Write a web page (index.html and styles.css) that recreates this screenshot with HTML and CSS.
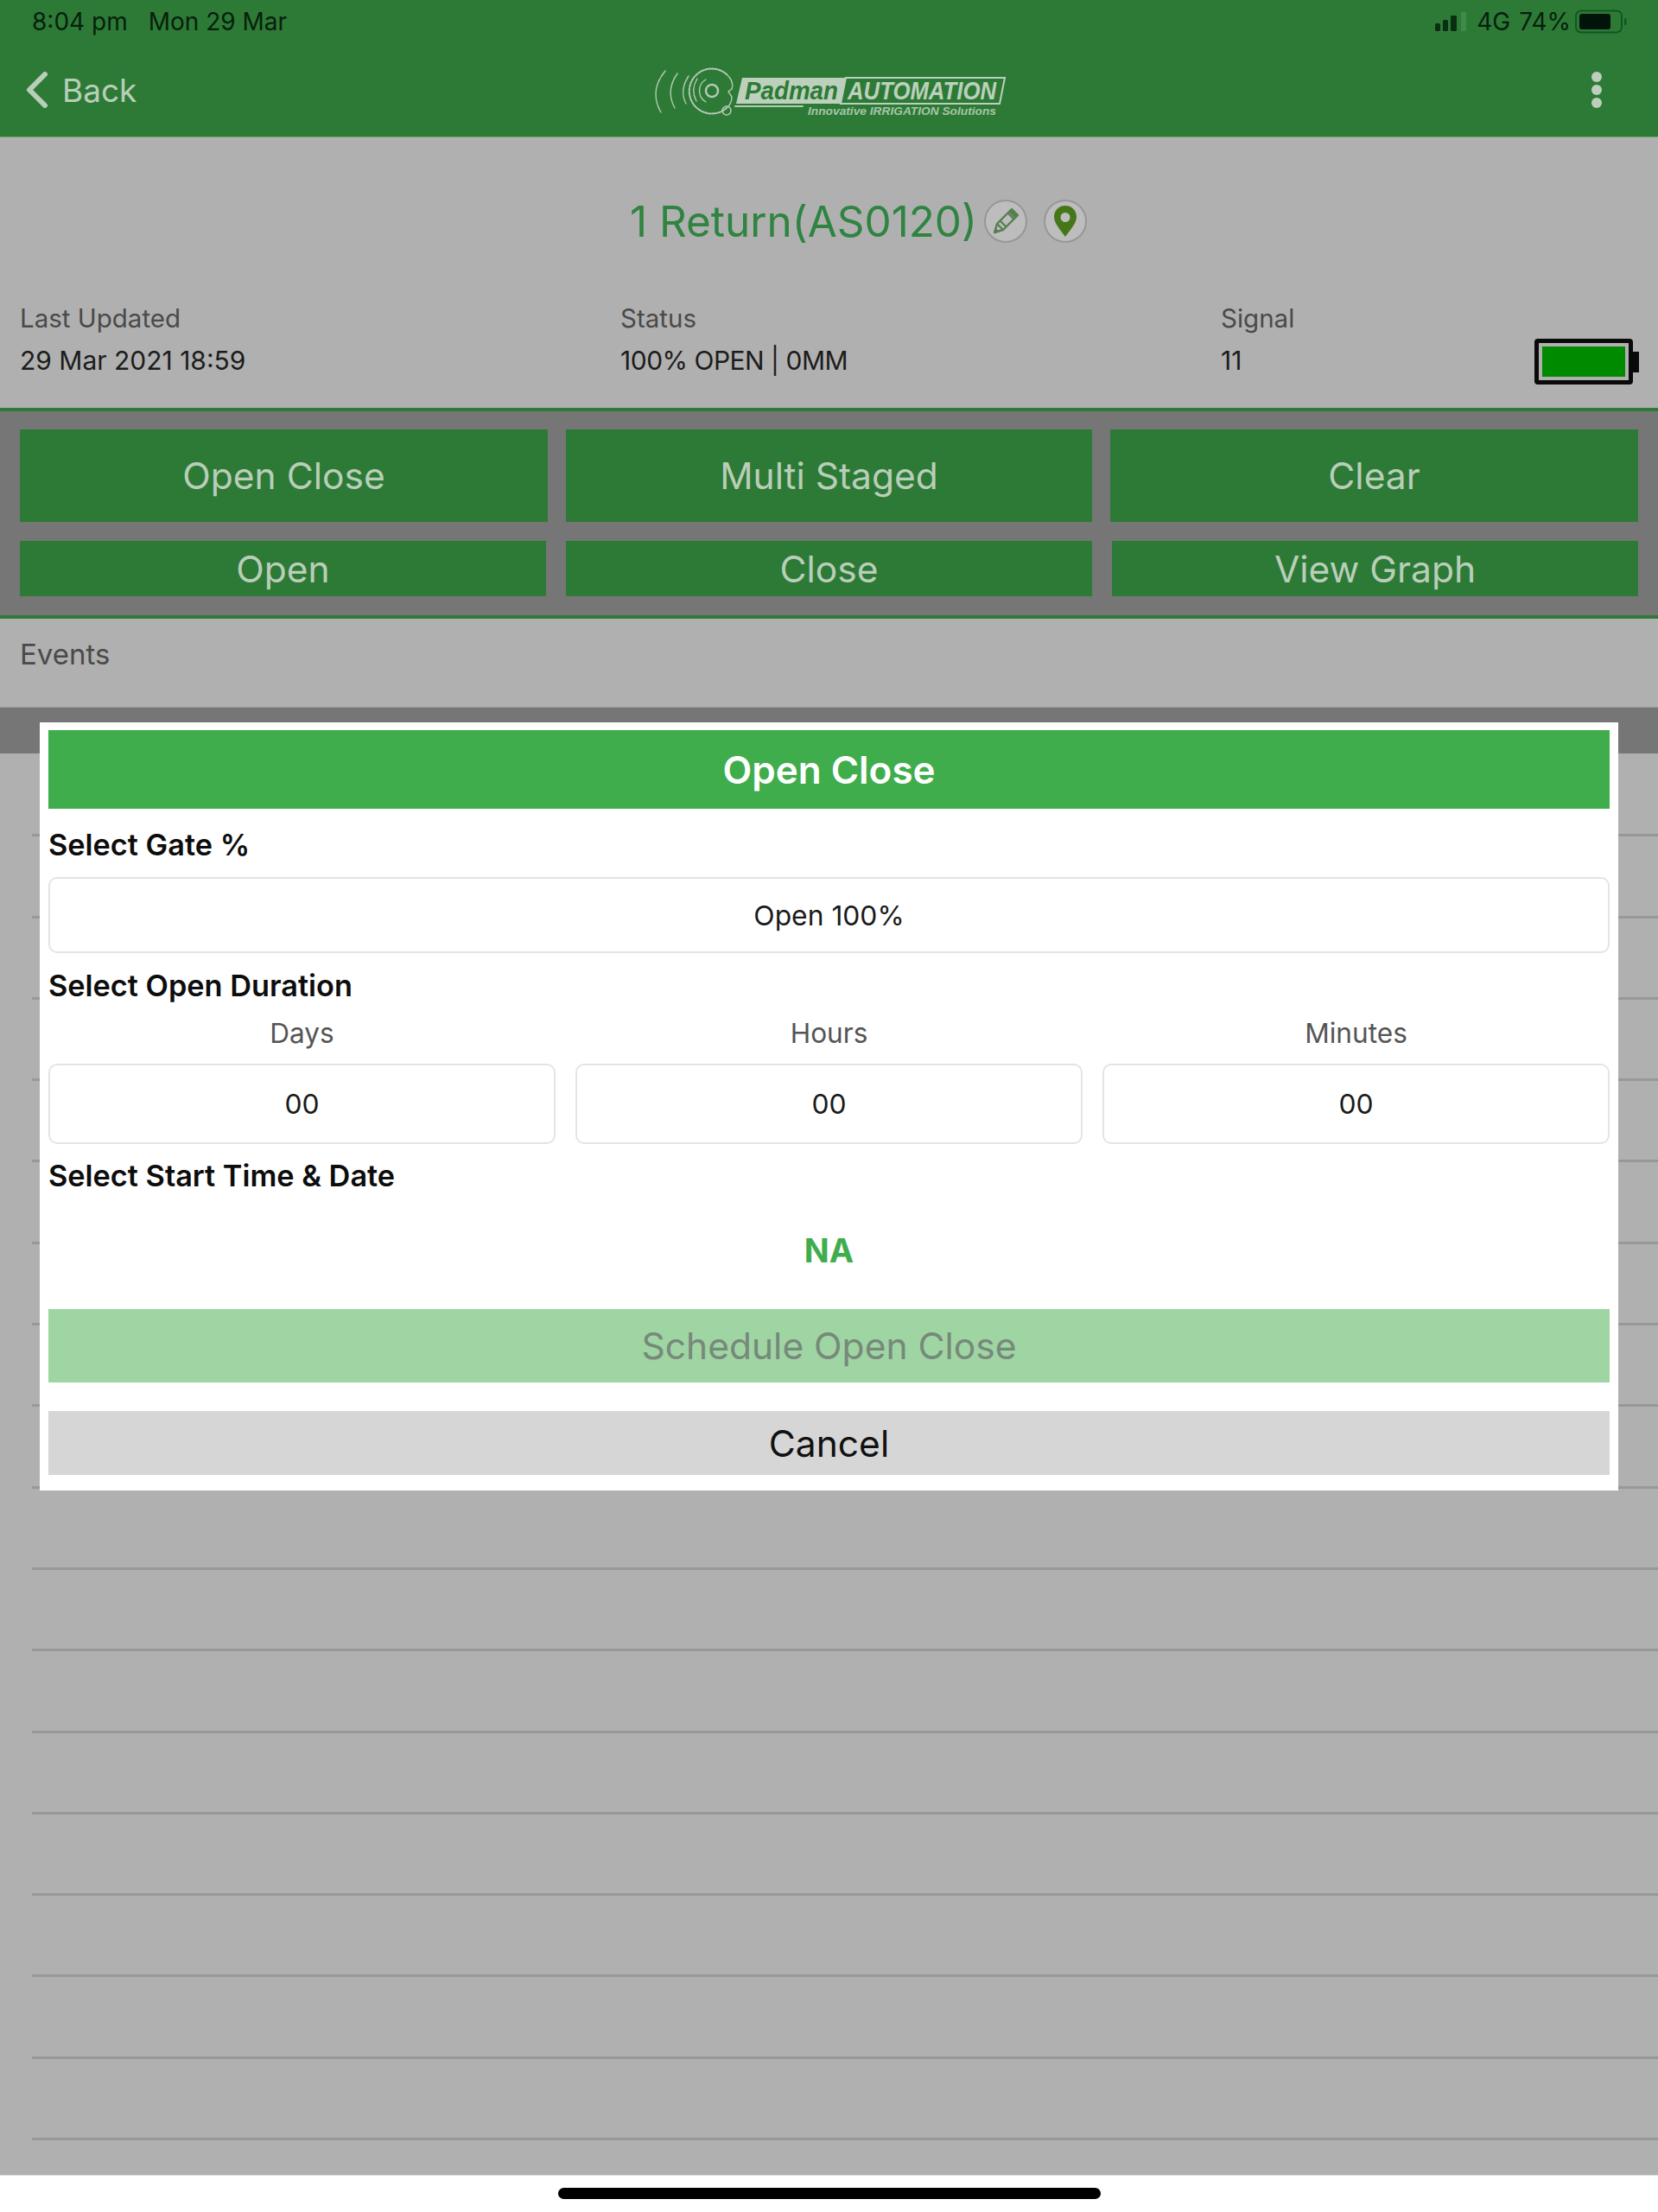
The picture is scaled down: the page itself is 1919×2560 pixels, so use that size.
FILE: index.html
```html
<!DOCTYPE html>
<html lang="en">
<head>
<meta charset="utf-8">
<title>Open Close</title>
<link rel="stylesheet" href="styles.css">
</head>
<body>
<div class="page">
  <header class="appbar">
    <div class="status">
      <div class="status-left"><span>8:04 pm</span><span>Mon 29 Mar</span></div>
      <div class="status-right">
        <svg class="signal" width="38" height="24" viewBox="0 0 38 24"><rect x="0" y="14" width="6" height="9" rx="1.5" fill="#0a2e12"/><rect x="9" y="10" width="6" height="13" rx="1.5" fill="#0a2e12"/><rect x="18" y="5" width="7" height="18" rx="1.5" fill="#0a2e12"/><rect x="30" y="1" width="6" height="22" fill="#3f8a48"/></svg>
        <span>4G</span><span>74%</span>
        <svg class="ios-batt" width="62" height="28" viewBox="0 0 62 28"><rect x="1" y="1.500" width="53" height="25" rx="6" fill="none" stroke="#145522" stroke-width="2"/><rect x="5" y="5" width="36" height="18" rx="3" fill="#02140a"/><rect x="57" y="10" width="2.500" height="8" rx="1" fill="#145522"/></svg>
      </div>
    </div>
    <nav class="nav">
      <div class="back">
        <svg width="28" height="42" viewBox="0 0 28 42"><path d="M24 3 L6 21 L24 39" fill="none" stroke="#b9ceb9" stroke-width="6" stroke-linecap="round" stroke-linejoin="round"/></svg>
        <span>Back</span>
      </div>
      <svg class="logo" width="430" height="70" viewBox="0 0 430 70">
        <g fill="none" stroke="#b4cab4" stroke-width="1.400" stroke-linecap="round">
          <path d="M25 12 Q6 35 20 60"/>
          <path d="M39 15 Q25 35 36 55"/>
          <path d="M52 18 Q41 35 49 50"/>
          <path d="M62 21 Q54 34 61 47"/>
          <circle cx="79" cy="35" r="7" stroke-width="2.500" stroke-dasharray="3 1.500"/>
          <path d="M96 16 A26 26 0 1 0 96 55" stroke-width="2" stroke-dasharray="2.500 1.500"/>
          <path d="M96 16 Q105 24 102 33 L98 36 L102 42 Q102 50 96 55" stroke-width="1.400"/>
          <path d="M72 22 A15 15 0 0 0 72 48"/>
          <circle cx="96" cy="58" r="5" stroke-width="1.600"/>
          <path d="M106 53 L184 53" stroke-width="2"/>
        </g>
        <polygon points="114,20 234,20 228,50 107,50" fill="#bcd0bc"/>
        <polygon points="234,20 418,20 412,50 228,50" fill="none" stroke="#bcd0bc" stroke-width="2"/>
        <text x="117" y="45" class="logo-a" textLength="108" lengthAdjust="spacingAndGlyphs">Padman</text>
        <text x="236" y="45" class="logo-b" textLength="172" lengthAdjust="spacingAndGlyphs">AUTOMATION</text>
        <text x="190" y="63" class="logo-c" textLength="218" lengthAdjust="spacingAndGlyphs">Innovative IRRIGATION Solutions</text>
      </svg>
      <div class="kebab"><i></i><i></i><i></i></div>
    </nav>
  </header>

  <section class="summary">
    <div class="title-row">
      <h1>1 Return(AS0120)</h1>
      <span class="round">
        <svg width="34" height="34" viewBox="0 0 34 34"><g fill="none" stroke="#55804e" stroke-width="2.400" stroke-linejoin="round"><path d="M4 30 L7 20 L24 3 L31 10 L14 27 Z"/><path d="M7 20 L14 27 M11 17 L17 23 M20 8 L26 14"/></g><path d="M24 3 L31 10 L27.500 13.500 L20.500 6.500 Z" fill="#55804e"/><path d="M4 30 L5.500 25 L9 28.500 Z" fill="#55804e"/></svg>
      </span>
      <span class="round round-gap">
        <svg width="28" height="38" viewBox="0 0 28 38"><path fill-rule="evenodd" d="M14 1 C6 1 1 7 1 14 C1 22 10 31 14 37 C18 31 27 22 27 14 C27 7 22 1 14 1 Z M14 9 A5.500 5.500 0 1 1 14 20 A5.500 5.500 0 1 1 14 9 Z" fill="#457719"/></svg>
      </span>
    </div>
    <div class="info">
      <div class="info-col"><div class="lbl">Last Updated</div><div class="val">29 Mar 2021 18:59</div></div>
      <div class="info-col"><div class="lbl">Status</div><div class="val val-status">100% OPEN | 0MM</div></div>
      <div class="info-col info-last"><div class="lbl">Signal</div><div class="val">11</div></div>
      <div class="battery"><div class="battery-body"><div class="battery-fill"></div></div><div class="battery-cap"></div></div>
    </div>
  </section>

  <section class="actions">
    <div class="btn-row row-top">
      <div class="btn tall">Open Close</div>
      <div class="btn tall">Multi Staged</div>
      <div class="btn tall">Clear</div>
    </div>
    <div class="btn-row row-bottom">
      <div class="btn short">Open</div>
      <div class="btn short">Close</div>
      <div class="btn short">View Graph</div>
    </div>
  </section>

  <section class="events">Events</section>
  <div class="thead"></div>
  <div class="rows">
    <div class="row"></div><div class="row"></div><div class="row"></div><div class="row"></div>
    <div class="row"></div><div class="row"></div><div class="row"></div><div class="row"></div>
    <div class="row"></div><div class="row"></div><div class="row"></div><div class="row"></div>
    <div class="row"></div><div class="row"></div><div class="row"></div><div class="row"></div>
    <div class="row"></div>
  </div>
  <footer class="home"><div class="home-bar"></div></footer>

  <div class="modal">
    <div class="modal-head">Open Close</div>
    <div class="m-label l-gate">Select Gate %</div>
    <div class="field f-gate">Open 100%</div>
    <div class="m-label l-dur">Select Open Duration</div>
    <div class="dur-grid">
      <div class="dur-col"><div class="dur-name">Days</div><div class="field f-dur">00</div></div>
      <div class="dur-col"><div class="dur-name">Hours</div><div class="field f-dur">00</div></div>
      <div class="dur-col"><div class="dur-name">Minutes</div><div class="field f-dur">00</div></div>
    </div>
    <div class="m-label l-start">Select Start Time &amp; Date</div>
    <div class="na">NA</div>
    <div class="m-btn schedule">Schedule Open Close</div>
    <div class="m-btn cancel">Cancel</div>
  </div>
</div>
</body>
</html>
```

FILE: styles.css
```css
* { box-sizing: border-box; }
html, body { margin: 0; padding: 0; background: #fff; }
body { font-family: Inter, "Liberation Sans", sans-serif; }
.page { position: relative; width: 1919px; height: 2560px; overflow: hidden; }

.appbar { height: 159px; background: #2d7a36; border-bottom: 1px solid #62a86a; }
.status { height: 50px; display: flex; justify-content: space-between; align-items: center; padding: 0 34px 0 37px; color: #071f0d; font-size: 28px; }
.status-left { display: flex; gap: 24px; }
.status-right { display: flex; align-items: center; gap: 10px; }
.ios-batt { margin-left: -5px; }
.nav { height: 108px; display: flex; align-items: center; justify-content: space-between; padding: 0 65px 0 28px; position: relative; }
.back { display: flex; align-items: center; gap: 16px; color: #b9ceb9; font-size: 37px; }
.logo { position: absolute; left: 745px; top: 20px; }
.logo-a { font: italic 700 29px "Liberation Sans", sans-serif; fill: #2d7a36; }
.logo-b { font: italic 700 29px "Liberation Sans", sans-serif; fill: #bcd0bc; }
.logo-c { font: italic 700 13.500px "Liberation Sans", sans-serif; fill: #a9c4a9; }
.kebab { display: flex; flex-direction: column; gap: 3px; }
.kebab i { display: block; width: 12px; height: 12px; border-radius: 50%; background: #bccfbc; }

.summary { height: 313px; background: #b0b0b0; }
.title-row { height: 187px; display: flex; align-items: center; justify-content: center; padding: 6px 0 0 68px; }
.title-row h1 { margin: 0 8px 0 0; font-size: 49.400px; font-weight: 400; color: #2e8440; }
.round { width: 50px; height: 50px; border-radius: 50%; background: #bdbdbd; border: 2px solid #979797; display: flex; align-items: center; justify-content: center; }
.round-gap { margin-left: 19px; }
.info { display: flex; padding-left: 23px; align-items: flex-start; }
.info-col { width: 695px; }
.info-last { width: 363px; }
.lbl { height: 44px; line-height: 44px; font-size: 29.500px; color: #4a4a4a; }
.val { height: 52px; line-height: 52px; font-size: 30px; color: #1c1c1c; margin-top: 1px; }
.val-status { letter-spacing: -0.500px; }
.battery { display: flex; align-items: center; margin-top: 46px; }
.battery-body { width: 114px; height: 53px; border: 5px solid #0a0a0a; border-radius: 4px; padding: 4px; }
.battery-fill { width: 100%; height: 100%; background: #008a00; }
.battery-cap { width: 7px; height: 24px; background: #0a0a0a; }

.actions { height: 244px; background: #767676; border-top: 4px solid #2f7a39; border-bottom: 4px solid #2f7a39; padding-top: 21px; display: flex; flex-direction: column; gap: 22px; }
.btn-row { display: grid; padding-left: 23px; }
.row-top { grid-template-columns: 611px 609px 611px; gap: 21px; }
.row-bottom { grid-template-columns: repeat(3, 609px); gap: 23px; }
.btn { background: #2d7a36; color: #b9ceb9; display: flex; align-items: center; justify-content: center; font-size: 42.500px; }
.tall { height: 107px; }
.short { height: 64px; }

.events { height: 102px; background: #b0b0b0; padding: 25px 0 0 23px; line-height: 32px; font-size: 33px; color: #4a4a4a; }
.thead { height: 54px; background: #767676; border-top: 1px solid #9b9b9b; }
.rows { height: 1645px; background: #b0b0b0; padding: 2px 0 0 37px; }
.row { height: 94.300px; border-bottom: 3px solid #989898; }
.home { height: 43px; display: flex; justify-content: center; padding-top: 14px; border-top: 1px solid #dcdcdc; }
.home-bar { width: 628px; height: 13px; border-radius: 7px; background: #000; }

.modal { position: absolute; left: 46px; top: 836px; width: 1827px; height: 889px; background: #fff; padding: 9px 10px; }
.modal-head { height: 91px; background: #40ad4d; color: #fff; display: flex; align-items: center; justify-content: center; font-size: 44px; font-weight: 600; }
.m-label { height: 40px; line-height: 40px; font-size: 34.300px; font-weight: 600; color: #0d0d0d; }
.l-gate { margin-top: 22px; }
.l-dur { margin-top: 18px; }
.l-start { margin-top: 17px; }
.field { border: 2px solid #e4e4e4; border-radius: 10px; display: flex; align-items: center; justify-content: center; font-size: 31.800px; color: #1a1a1a; background: #fff; }
.f-gate { height: 88px; margin-top: 17px; }
.f-dur { height: 93px; }
.dur-grid { display: grid; grid-template-columns: repeat(3, 587px); gap: 23px; margin-top: 15px; }
.dur-name { height: 40px; line-height: 40px; text-align: center; font-size: 31.600px; color: #555; margin-bottom: 15px; }
.na { height: 40px; line-height: 40px; margin-top: 46px; text-align: center; font-size: 38px; font-weight: 700; color: #40ad4d; }
.m-btn { display: flex; align-items: center; justify-content: center; font-size: 42.500px; }
.schedule { height: 85px; margin-top: 48px; background: #9fd5a2; color: #76897a; }
.cancel { height: 74px; margin-top: 33px; background: #d6d6d6; color: #111; }
```
